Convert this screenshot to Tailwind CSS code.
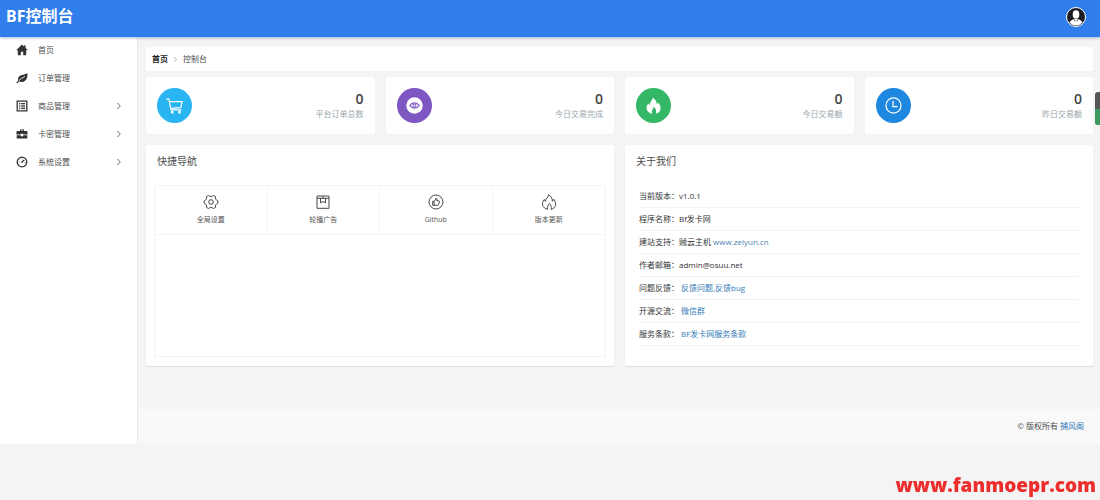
<!DOCTYPE html>
<html lang="zh-CN">
<head>
  <meta charset="UTF-8">
  <meta name="viewport" content="width=device-width, initial-scale=1.0">
  <title>BF控制台</title>
  <script src="https://cdn.jsdelivr.net/npm/@tailwindcss/browser@4"></script>
</head>
<body class="bg-[#f4f4f4] text-[#4d4d4d] text-[8px] leading-[12px] font-['Open_Sans','Noto_Sans_CJK_SC',sans-serif]">
  <!-- Header -->
  <header class="relative z-10 h-[37px] flex items-center justify-between pl-[6px] pr-[14px] bg-[#307eec] shadow-[0_1px_3px_rgba(30,60,120,0.35)]">
    <h1 class="text-[16px] leading-[20px] pb-[6px] font-bold text-white font-['Noto_Sans','Noto_Sans_CJK_SC',sans-serif]">BF控制台</h1>
    <button type="button" aria-label="用户" class="size-[20px] mb-[3px]">
      <svg viewBox="0 0 20 20" class="size-full">
        <circle cx="10" cy="10" r="9.5" fill="#1d1d27" stroke="#fff" stroke-width="1"/>
        <path d="M3.400 15.600c1-2.200 3-3 5-3.600h3.200c2 .6 4 1.400 5 3.600a9 9 0 0 1-13.200 0z" fill="#fff"/>
        <ellipse cx="10" cy="7.500" rx="3.300" ry="4.200" fill="#fff"/>
        <path d="M8 12.300l1.300.9-.3 1.800zM12 12.300l-1.300.9.3 1.800z" fill="#1d1d27"/>
      </svg>
    </button>
  </header>

  <div class="flex">
    <!-- Sidebar -->
    <nav class="w-[138px] shrink-0 bg-white border-r border-[#e9e9e9]">
      <ul class="-mt-px">
        <li><a href="#" class="flex items-center h-[28px] pl-4 pr-[15px]">
          <svg viewBox="0 0 12 12" class="size-3" fill="#333"><path d="M6 .5L.2 6.200h1.600v5h3V7.800h2.400v3.400h3v-5h1.600L9.600 4V1.200H8.200v1.500z"/></svg>
          <span class="ml-[10px]">首页</span>
        </a></li>
        <li><a href="#" class="flex items-center h-[28px] pl-4 pr-[15px]">
          <svg viewBox="0 0 12 12" class="size-3" fill="#333"><path d="M11.300 1c.6 4.300-.8 8.600-5.300 9-1.200.1-2.200-.2-3-.5l-1.800 1.700-.9-.6 2-2C1.400 6.300 2.600 4 5.500 3.100 8 2.400 10 2.500 11.300 1z"/><path d="M3 8.500C5 6.500 6.600 6 9 4.400" fill="none" stroke="#fff" stroke-width=".9"/></svg>
          <span class="ml-[10px]">订单管理</span>
        </a></li>
        <li><a href="#" class="flex items-center h-[28px] pl-4 pr-[15px]">
          <svg viewBox="0 0 12 12" class="size-3" fill="none" stroke="#333"><path d="M1.200 1.200h9.600v9.600H1.200z" stroke-width="1.300"/><path d="M3 3.500h1.300M3 5.200h1.300M3 6.900h1.300M3 8.600h1.300M5.200 3.500H9M5.200 5.200H9M5.200 6.900H9M5.200 8.600H9"/></svg>
          <span class="ml-[10px]">商品管理</span>
          <svg viewBox="0 0 6 8" class="ml-auto w-[6px] h-2" fill="none" stroke="#555" stroke-width=".9"><path d="M1.300 1l3 3-3 3"/></svg>
        </a></li>
        <li><a href="#" class="flex items-center h-[28px] pl-4 pr-[15px]">
          <svg viewBox="0 0 12 12" class="size-3" fill="#333"><path d="M4 3V1.500h4V3h2.700c.5 0 .8.300.8.800v2.700H7.200v-.8H4.800v.8H.5V3.800c0-.5.300-.8.800-.8zm.9 0h2.200v-.6H4.900zM.7 7.200h4.100v1h2.400v-1h4.100v3.300H.7z"/></svg>
          <span class="ml-[10px]">卡密管理</span>
          <svg viewBox="0 0 6 8" class="ml-auto w-[6px] h-2" fill="none" stroke="#555" stroke-width=".9"><path d="M1.300 1l3 3-3 3"/></svg>
        </a></li>
        <li><a href="#" class="flex items-center h-[28px] pl-4 pr-[15px]">
          <svg viewBox="0 0 12 12" class="size-3" fill="none" stroke="#333"><circle cx="6" cy="6" r="4.800" stroke-width="1.300"/><path d="M5.300 6.800L8.300 4" stroke-width="1.200"/><path d="M6 2.300v1M2.600 6h1M3.500 3.600l.6.600M8.500 6.500h1" stroke-width=".7"/></svg>
          <span class="ml-[10px]">系统设置</span>
          <svg viewBox="0 0 6 8" class="ml-auto w-[6px] h-2" fill="none" stroke="#555" stroke-width=".9"><path d="M1.300 1l3 3-3 3"/></svg>
        </a></li>
      </ul>
    </nav>

    <div class="flex-1 min-w-0">
      <main class="pt-[10px] pl-2 pr-[7px] pb-[43px]">
        <!-- Breadcrumb -->
        <div class="flex items-center h-[24px] px-[6px] bg-white">
          <a href="#" class="font-bold text-[#222]">首页</a>
          <svg viewBox="0 0 6 8" class="mx-[5px] w-[5px] h-[7px]" fill="none" stroke="#999" stroke-width=".9"><path d="M1.300 1l3 3-3 3"/></svg>
          <span>控制台</span>
        </div>

        <!-- Stats -->
        <div class="grid grid-cols-4 gap-[11px] mt-[6px]">
          <section class="flex items-center justify-between h-[57px] px-[11px] bg-white rounded-[2px]">
            <svg viewBox="0 0 34 34" class="size-[35px]"><circle cx="17" cy="17" r="17" fill="#29b4f2"/><g fill="none" stroke="#fff" stroke-width="1.200"><path d="M9 10.800h2.600l1.900 10.400h10.300M12.200 13.200h12.300l-1.500 5.800-9.800.7"/><circle cx="14.800" cy="23.500" r=".8"/><circle cx="21.800" cy="23.500" r=".8"/></g></svg>
            <div class="text-right">
              <p class="text-[14px] leading-[16px] font-semibold text-[#444]">0</p>
              <p class="leading-[14px] text-[#98a6ad]">平台订单总数</p>
            </div>
          </section>
          <section class="flex items-center justify-between h-[57px] px-[11px] bg-white rounded-[2px]">
            <svg viewBox="0 0 34 34" class="size-[35px]"><circle cx="17" cy="17" r="17" fill="#7e57c2"/><circle cx="17" cy="17" r="8" fill="#fff"/><path d="M12.500 17c2.200-3.300 6.800-3.300 9 0-2.200 3.300-6.800 3.300-9 0z" fill="none" stroke="#7e57c2" stroke-width="1.300"/><circle cx="17" cy="17" r="1.500" fill="none" stroke="#7e57c2"/></svg>
            <div class="text-right">
              <p class="text-[14px] leading-[16px] font-semibold text-[#444]">0</p>
              <p class="leading-[14px] text-[#98a6ad]">今日交易完成</p>
            </div>
          </section>
          <section class="flex items-center justify-between h-[57px] px-[11px] bg-white rounded-[2px]">
            <svg viewBox="0 0 34 34" class="size-[35px]"><circle cx="17" cy="17" r="17" fill="#34b868"/><path d="M16.300 9.500c3 1.800 4 4.200 3.800 6.300.8-.4 1.200-1 1.400-1.800 3.600 4 3.200 9.500-2 11 .6-2.800-.2-5.300-2.300-6.900-.4 2-2.600 3.900-1.500 6.900-5.500-1-7-6.400-3.700-10 .2.800.5 1.300 1.100 1.600.2-3 2.900-4.200 3.200-7.100z" fill="#fff"/></svg>
            <div class="text-right">
              <p class="text-[14px] leading-[16px] font-semibold text-[#444]">0</p>
              <p class="leading-[14px] text-[#98a6ad]">今日交易额</p>
            </div>
          </section>
          <section class="flex items-center justify-between h-[57px] px-[11px] bg-white rounded-[2px]">
            <svg viewBox="0 0 34 34" class="size-[35px]"><circle cx="17" cy="17" r="17" fill="#1e88e0"/><circle cx="17" cy="17" r="7.300" fill="none" stroke="#fff" stroke-width="1.200"/><path d="M16.500 12.500V18H21" fill="none" stroke="#fff" stroke-width="1.200"/></svg>
            <div class="text-right">
              <p class="text-[14px] leading-[16px] font-semibold text-[#444]">0</p>
              <p class="leading-[14px] text-[#98a6ad]">昨日交易额</p>
            </div>
          </section>
        </div>

        <div class="grid grid-cols-2 gap-[11px] mt-[11px]">
          <!-- Quick links -->
          <section class="flex flex-col px-2 pb-[9px] bg-white rounded-[2px] shadow-[0_1px_1px_rgba(0,0,0,0.1)]">
            <h2 class="h-10 pt-2 pl-[3px] text-[10px] leading-[16px]">快捷导航</h2>
            <div class="flex-1 border border-[#f4f4f4]">
              <div class="grid grid-cols-4 divide-x divide-[#f4f4f4] border-b border-[#f4f4f4] text-[7px] leading-[10px] text-[#555]">
                <a href="#" class="flex flex-col items-center gap-[5px] h-[48px] pt-2">
                  <svg viewBox="0 0 16 16" class="size-4" fill="none" stroke="#333" stroke-width=".9"><path d="M5.500 1.500c1.200 1.300 3.800 1.300 5 0l2 1.100c-.5 1.800.6 3.800 2.400 4.300v2.200c-1.800.5-2.900 2.500-2.400 4.300l-2 1.100c-1.200-1.300-3.800-1.300-5 0l-2-1.100C4 11.600 2.900 9.600 1.100 9.100V6.900C2.900 6.400 4 4.400 3.500 2.600z"/><circle cx="8" cy="8" r="2.300"/></svg>
                  <span>全局设置</span>
                </a>
                <a href="#" class="flex flex-col items-center gap-[5px] h-[48px] pt-2">
                  <svg viewBox="0 0 16 16" class="size-4" fill="none" stroke="#333" stroke-width=".9"><path d="M2 2h12v12.300H2zM2 4.300h12M5.500 4.300v4.500L8 7.600l2.500 1.200V4.300M8 2v2.300"/></svg>
                  <span>轮播广告</span>
                </a>
                <a href="#" class="flex flex-col items-center gap-[5px] h-[48px] pt-2">
                  <svg viewBox="0 0 16 16" class="size-4" fill="none" stroke="#333" stroke-width=".9"><circle cx="8" cy="8" r="7"/><path d="M4.700 7.300h1.400v4H4.700zM6.100 7.400c1-.8 1.600-1.900 1.700-3.200 1.300-.1 1.500 1.300 1 2.600h2c.7 0 .7.700.6 1.100l-.8 2.700c-.2.500-.5.700-1 .7H6.100"/></svg>
                  <span>Github</span>
                </a>
                <a href="#" class="flex flex-col items-center gap-[5px] h-[48px] pt-2">
                  <svg viewBox="0 0 16 16" class="size-4" fill="none" stroke="#333" stroke-width=".9"><path d="M7.600.8c3 1.900 3.900 4.200 3.700 6.300.8-.4 1.200-1 1.400-1.800 3.400 4.200 2.400 8.800-2.700 10 .6-2.800-.2-4.600-1.800-5.900-.4 1.800-2.500 3-1.700 5.900C1.300 14.100-.1 9.300 3.300 5.500c.2.900.5 1.400 1.100 1.700C4.500 4.400 7.300 3.700 7.600.8z"/></svg>
                  <span>版本更新</span>
                </a>
              </div>
            </div>
          </section>

          <!-- About -->
          <section class="px-[14px] pb-5 bg-white rounded-[2px] shadow-[0_1px_1px_rgba(0,0,0,0.1)]">
            <h2 class="h-10 pt-2 -ml-[3px] text-[10px] leading-[16px]">关于我们</h2>
            <ul class="text-[#333]">
              <li class="flex items-center h-[23px] border-b border-[#f3f3f3]">当前版本：<span>v1.0.1</span></li>
              <li class="flex items-center h-[23px] border-b border-[#f3f3f3]">程序名称：<span>Bf发卡网</span></li>
              <li class="flex items-center h-[23px] border-b border-[#f3f3f3]">建站支持：<span>贼云主机</span><a href="#" class="ml-[2px] text-[#4f81b5]">www.zeiyun.cn</a></li>
              <li class="flex items-center h-[23px] border-b border-[#f3f3f3]">作者邮箱：<span>admin@osuu.net</span></li>
              <li class="flex items-center h-[23px] border-b border-[#f3f3f3]">问题反馈：<a href="#" class="ml-[2px] text-[#337ab7]">反馈问题,反馈bug</a></li>
              <li class="flex items-center h-[23px] border-b border-[#f3f3f3]">开源交流：<a href="#" class="ml-[2px] text-[#337ab7]">微信群</a></li>
              <li class="flex items-center h-[23px] border-b border-[#f3f3f3]">服务条款：<a href="#" class="ml-[2px] text-[#337ab7]">BF发卡网服务条款</a></li>
            </ul>
          </section>
        </div>
      </main>

      <footer class="flex items-center justify-end h-[35px] pr-4 pb-[2px] bg-[#f9f9f9]">
        <p>© 版权所有 <a href="#" class="text-[#337ab7]">捕风阁</a></p>
      </footer>
    </div>
  </div>

  <!-- Floating side handle -->
  <div class="fixed right-0 top-[92px] w-[5px] h-[33px] rounded-l-[3px] overflow-hidden bg-[#555]">
    <div class="mt-[17px] h-4 bg-[#3d9a5c]"></div>
  </div>

  <p class="fixed right-1 bottom-[3px] text-[19px] leading-[24px] font-extrabold text-[#ee2d2d]">www.fanmoepr.com</p>
</body>
</html>
